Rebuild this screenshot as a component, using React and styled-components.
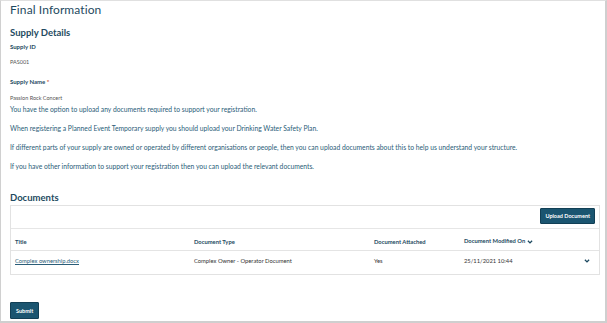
import React from 'react';
import styled, { createGlobalStyle } from 'styled-components';

const GlobalStyle = createGlobalStyle`
  html, body {
    margin: 0;
    padding: 0;
    background: #fff;
    font-family: Lato, 'Open Sans', Arial, sans-serif;
  }
`;

const Frame = styled.div`
  box-sizing: border-box;
  width: 607px;
  height: 323px;
  border-left: 1px solid #d0d0d0;
  border-top: 1px solid #e0e0e0;
  border-right: 2px solid #cfcfcf;
  border-bottom: 2px solid #cfcfcf;
  padding: 0 5px 0 9px;
  overflow: hidden;
`;

const PageTitle = styled.h1`
  margin: 0;
  padding-top: 1px;
  font-size: 12px;
  font-weight: 400;
  letter-spacing: 0.1px;
  color: #1e4a61;
  line-height: 16px;
`;

const SectionTitle = styled.h2`
  margin: ${p => p.top}px 0 0;
  font-size: 9.5px;
  font-weight: 700;
  color: #1e4a61;
  line-height: 13px;
`;

const Label = styled.div`
  margin-top: ${p => p.top}px;
  font-size: 6px;
  font-weight: 700;
  color: #1e4a61;
  line-height: 9px;
  span {
    color: #c0392b;
  }
`;

const Value = styled.div`
  margin-top: ${p => p.top}px;
  font-size: 5.5px;
  color: #555;
  line-height: 8px;
`;

const Para = styled.p`
  margin: ${p => p.top}px 0 0;
  font-size: 6.75px;
  color: #2a5d78;
  line-height: 9px;
`;

const DocBox = styled.div`
  margin-top: 1px;
  border: 1px solid #e2e2e2;
`;

const Toolbar = styled.div`
  display: flex;
  justify-content: flex-end;
  padding: 2px 4px 4px 0;
  border-bottom: 1px solid #e6e6e6;
`;

const Button = styled.button`
  background: #1b5570;
  color: #fff;
  border: 1px solid #123f55;
  border-radius: 1px;
  font-family: inherit;
  font-size: 5.5px;
  font-weight: 700;
  padding: 0 ${p => p.px || 4}px;
  height: ${p => p.h || 16}px;
  cursor: pointer;
`;

const Row = styled.div`
  box-sizing: border-box;
  display: grid;
  grid-template-columns: 179px 180px 90px 1fr 24px;
  align-items: center;
  height: ${p => p.h}px;
  padding: ${p => p.pad};
  padding-left: 4px;
  border-bottom: ${p => (p.divider ? '1px solid #e4e4e4' : 'none')};
  font-size: 5.8px;
  color: ${p => (p.head ? '#1e4a61' : '#333')};
  font-weight: ${p => (p.head ? 700 : 400)};
`;

const ChevronCell = styled.span`
  display: flex;
  justify-content: center;
`;

const Link = styled.a`
  color: #2a5d78;
  text-decoration: underline;
`;

const Chevron = ({ size = 6 }) => (
  <svg width={size} height={size} viewBox="0 0 10 10" style={{ verticalAlign: 'middle' }}>
    <path d="M1.5 3 L5 6.5 L8.5 3" fill="none" stroke="#1e4a61" strokeWidth="2.2" />
  </svg>
);

const Footer = styled.div`
  display: flex;
  margin-top: 27px;
`;

export default function App() {
  return (
    <>
      <GlobalStyle />
      <Frame>
        <PageTitle>Final Information</PageTitle>
        <SectionTitle top={8}>Supply Details</SectionTitle>
        <Label top={3}>Supply ID</Label>
        <Value top={7}>PAS001</Value>
        <Label top={11}>Supply Name <span>*</span></Label>
        <Value top={8}>Passion Rock Concert</Value>
        <Para top={3}>You have the option to upload any documents required to support your registration.</Para>
        <Para top={10}>When registering a Planned Event Temporary supply you should upload your Drinking Water Safety Plan.</Para>
        <Para top={10}>If different parts of your supply are owned or operated by different organisations or people, then you can upload documents about this to help us understand your structure.</Para>
        <Para top={10}>If you have other information to support your registration then you can upload the relevant documents.</Para>
        <SectionTitle top={20}>Documents</SectionTitle>
        <DocBox>
          <Toolbar>
            <Button h={16}>Upload Document</Button>
          </Toolbar>
          <Row head divider h={22} pad="3px 0 0">
            <span>Title</span>
            <span>Document Type</span>
            <span>Document Attached</span>
            <span>Document Modified On <Chevron size={6} /></span>
            <span />
          </Row>
          <Row h={23} pad="0 0 4px">
            <Link>Complex ownership.docx</Link>
            <span>Complex Owner - Operator Document</span>
            <span>Yes</span>
            <span>25/11/2021 10:44</span>
            <ChevronCell><Chevron /></ChevronCell>
          </Row>
        </DocBox>
        <Footer>
          <Button h={17} px={5}>Submit</Button>
        </Footer>
      </Frame>
    </>
  );
}
